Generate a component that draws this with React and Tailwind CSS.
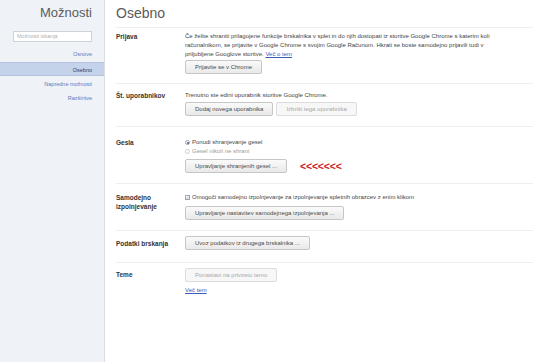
import React from 'react';

const Btn = ({ children, disabled, className = '' }) => (
  <button
    type="button"
    className={`h-[14px] px-[9px] rounded-[2px] border text-[6px] leading-[12px] ${
      disabled
        ? 'border-[#dcdcdc] bg-[#f7f7f7] text-[#a8a8a8]'
        : 'border-[#c6c6c6] bg-gradient-to-b from-[#fafafa] to-[#e9e9e9] text-[#4a4a4a]'
    } ${className}`}
  >
    {children}
  </button>
);

const Section = ({ label, className = '', children }) => (
  <div className={`flex border-b border-[#efefef] ${className}`}>
    <div className="w-[69px] shrink-0 text-[6.5px] font-bold text-[#333] leading-[9px]">{label}</div>
    <div className="flex-1 text-[6px] leading-[9px] text-[#444]">{children}</div>
  </div>
);

const navItems = ['Osnove', 'Osebno', 'Napredne možnosti', 'Razširitve'];

const App = () => {
  return (
    <div className="flex w-[545px] h-[362px] bg-white font-['Liberation_Sans',Arial,sans-serif] overflow-hidden">
      {/* Sidebar */}
      <div className="w-[105px] shrink-0 bg-[#eff2f7] border-r border-[#d9dde4] flex flex-col">
        <div className="pt-[5px] pr-[12px] text-right text-[13px] leading-[16px] text-[#5c5c5c]">Možnosti</div>
        <div className="mt-[10px] ml-[13px] mr-[12px] h-[11px] bg-white border border-[#cfd3d9] px-[3px] text-[5.5px] leading-[9px] text-[#b0b0b0]">
          Možnosti iskanja
        </div>
        <div className="mt-[5px] flex flex-col text-[5.5px]">
          {navItems.map((item) => (
            <div
              key={item}
              className={
                item === 'Osebno'
                  ? 'h-[14px] leading-[14px] pr-[12px] text-right bg-[#c4d2ea] border-y border-[#b4c4e0] text-[#2e3c5c] my-[1px]'
                  : 'h-[14px] leading-[14px] pr-[12px] text-right text-[#5a78bf]'
              }
            >
              {item}
            </div>
          ))}
        </div>
      </div>

      {/* Main */}
      <div className="flex-1 pl-[11px] pr-[12px]">
        <div className="h-[28px] pt-[5px] border-b border-[#efefef] text-[14px] leading-[16px] text-[#5a5a5a]">Osebno</div>

        <Section label="Prijava" className="pt-[4px] pb-[9px]">
          <div>
            Če želite shraniti prilagojene funkcije brskalnika v splet in do njih dostopati iz storitve Google Chrome s katerim koli
            <br />
            računalnikom, se prijavite v Google Chrome s svojim Google Računom. Hkrati se boste samodejno prijavili tudi v
            <br />
            priljubljene Googlove storitve. <span className="text-[#3b5cb8] underline">Več o tem</span>
          </div>
          <Btn className="mt-[1px]">Prijavite se v Chrome</Btn>
        </Section>

        <Section label="Št. uporabnikov" className="pt-[7px] pb-[10px]">
          <div>Trenutno ste edini uporabnik storitve Google Chrome.</div>
          <div className="mt-[2px] flex gap-[3px]">
            <Btn>Dodaj novega uporabnika</Btn>
            <Btn disabled>Izbriši tega uporabnika</Btn>
          </div>
        </Section>

        <Section label="Gesla" className="pt-[11px] pb-[10px]">
          <div className="flex items-center gap-[2px]">
            <span className="w-[5px] h-[5px] rounded-full border border-[#9aa3b0] bg-white flex items-center justify-center">
              <span className="w-[2px] h-[2px] rounded-full bg-[#4a5a78]" />
            </span>
            <span>Ponudi shranjevanje gesel</span>
          </div>
          <div className="flex items-center gap-[2px] text-[#9a9a9a]">
            <span className="w-[5px] h-[5px] rounded-full border border-[#c8cdd4] bg-white" />
            <span>Gesel nikoli ne shrani</span>
          </div>
          <div className="mt-[3px] flex items-center">
            <Btn>Upravljanje shranjenih gesel ...</Btn>
            <span className="ml-[13px] text-[10.5px] leading-[10px] font-bold tracking-[-0.2px] text-[#c8232c]">&lt;&lt;&lt;&lt;&lt;&lt;&lt;</span>
          </div>
        </Section>

        <Section
          label={
            <>
              Samodejno
              <br />
              izpolnjevanje
            </>
          }
          className="pt-[9px] pb-[10px]"
        >
          <div className="flex items-center gap-[2px]">
            <span className="w-[5px] h-[5px] border border-[#9aa3b0] bg-white flex items-center justify-center text-[4px] leading-[4px] text-[#4a5a78]">
              ✓
            </span>
            <span>Omogoči samodejno izpolnjevanje za izpolnjevanje spletnih obrazcev z enim klikom</span>
          </div>
          <Btn className="mt-[4px]">Upravljanje nastavitev samodejnega izpolnjevanja ...</Btn>
        </Section>

        <Section label={<div className="pt-[3px]">Podatki brskanja</div>} className="pt-[5px] pb-[12px]">
          <Btn>Uvoz podatkov iz drugega brskalnika ...</Btn>
        </Section>

        <div className="flex pt-[5px]">
          <div className="w-[69px] shrink-0 text-[6.5px] font-bold text-[#333] leading-[9px] pt-[2px]">Teme</div>
          <div className="flex-1 text-[6px] leading-[9px]">
            <Btn disabled>Ponastavi na privzeto temo</Btn>
            <div className="mt-[4px] text-[#3b5cb8] underline">Več tem</div>
          </div>
        </div>
      </div>
    </div>
  );
};

export default App;
